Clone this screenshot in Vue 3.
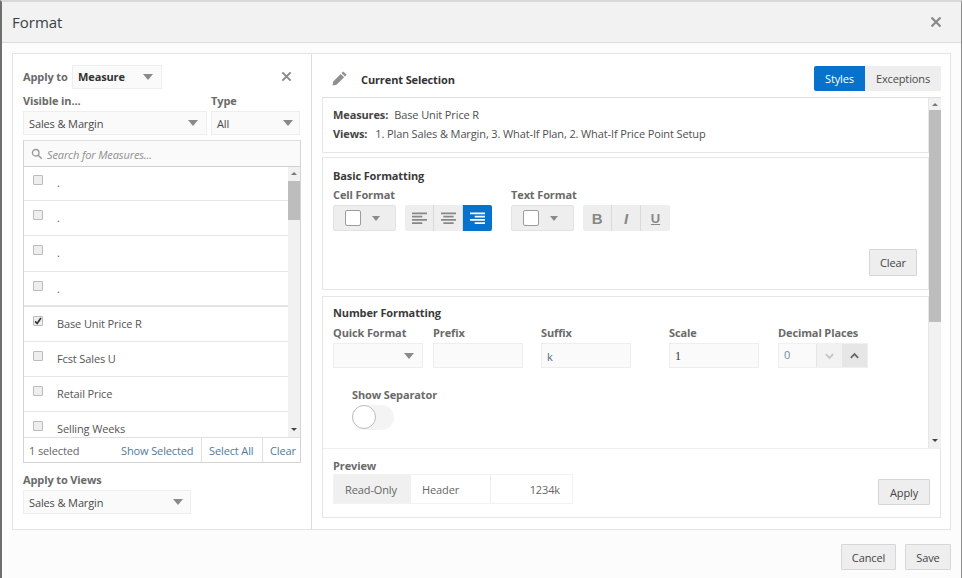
<script setup>
const rows = [
  { label: '.', checked: false }, { label: '.', checked: false }, { label: '.', checked: false }, { label: '.', checked: false },
  { label: 'Base Unit Price R', checked: true }, { label: 'Fcst Sales U', checked: false },
  { label: 'Retail Price', checked: false }, { label: 'Selling Weeks', checked: false }
]
</script>

<template>
  <div class="dialog">
    <header class="head">
      <h1>Format</h1>
      <svg class="x big" viewBox="0 0 12 12"><path d="M1.5 1.5l9 9M10.5 1.5l-9 9" /></svg>
    </header>
    <main class="main">
      <section class="left">
        <div class="applyrow">
          <label class="lab">Apply to</label>
          <div class="sel measure"><b>Measure</b><i class="caret"></i></div>
          <svg class="x small" viewBox="0 0 12 12"><path d="M1.5 1.5l9 9M10.5 1.5l-9 9" /></svg>
        </div>
        <div class="filters">
          <div class="fvis"><label class="lab">Visible in...</label><div class="sel"><span>Sales &amp; Margin</span><i class="caret"></i></div></div>
          <div class="ftype"><label class="lab">Type</label><div class="sel"><span>All</span><i class="caret"></i></div></div>
        </div>
        <div class="listbox">
          <div class="search">
            <svg viewBox="0 0 14 14" class="mag"><circle cx="5.5" cy="5.5" r="3.8" /><path d="M8.5 8.5l4 4" /></svg>
            <em>Search for Measures...</em>
          </div>
          <div class="listbody">
            <div class="rows">
              <div v-for="(r, i) in rows" :key="i" class="row">
                <span class="cb"><svg v-if="r.checked" viewBox="0 0 12 12"><path d="M2.5 6.5l2.5 2.5 4.5-6.5" /></svg></span>
                <span class="rowlabel">{{ r.label }}</span>
              </div>
            </div>
            <div class="sb">
              <i class="up"></i><div class="track"><div class="thumb t1"></div></div><i class="down"></i>
            </div>
          </div>
          <div class="listfoot">
            <span class="count">1 selected</span>
            <a class="fa">Show Selected</a><a class="fb">Select All</a><a class="fc">Clear</a>
          </div>
        </div>
        <label class="lab views">Apply to Views</label>
        <div class="sel viewsel"><span>Sales &amp; Margin</span><i class="caret"></i></div>
      </section>

      <section class="right">
        <div class="righthead">
          <svg class="pencil" viewBox="0 0 16 16"><path d="M11.2 1.4l3.4 3.4-1.7 1.7-3.4-3.4zM8.7 3.9l3.4 3.4-7.6 7.5-4 .7.7-4z" /></svg>
          <strong>Current Selection</strong>
          <div class="tabs"><span class="on">Styles</span><span>Exceptions</span></div>
        </div>
        <div class="scroller">
          <div class="content">
            <div class="box b1">
              <p><b>Measures:</b><span class="v1">Base Unit Price R</span></p>
              <p><b>Views:</b><span class="v2">1. Plan Sales &amp; Margin, 3. What-If Plan, 2. What-If Price Point Setup</span></p>
            </div>
            <div class="box b2">
              <h2>Basic Formatting</h2>
              <div class="fmtrow">
                <div class="cellf">
                  <label class="lab">Cell Format</label>
                  <div class="tools">
                    <div class="btn color"><i class="sw"></i><i class="caret"></i></div>
                    <div class="group">
                      <span><svg viewBox="0 0 16 12"><path d="M0 1h16M0 4.5h11M0 8h16M0 11.5h11" /></svg></span>
                      <span><svg viewBox="0 0 16 12"><path d="M0 1h16M2.5 4.5h11M0 8h16M2.5 11.5h11" /></svg></span>
                      <span class="on"><svg viewBox="0 0 16 12"><path d="M0 1h16M5 4.5h11M0 8h16M5 11.5h11" /></svg></span>
                    </div>
                  </div>
                </div>
                <div class="textf">
                  <label class="lab">Text Format</label>
                  <div class="tools">
                    <div class="btn color"><i class="sw"></i><i class="caret"></i></div>
                    <div class="group txt">
                      <span class="bb">B</span><span class="ii">I</span><span class="uu">U</span>
                    </div>
                  </div>
                </div>
              </div>
              <div class="clearrow"><button class="pb clear">Clear</button></div>
            </div>
            <div class="box b3">
              <h2>Number Formatting</h2>
              <div class="numrow">
                <div class="f1"><label class="lab">Quick Format</label><div class="sel"><span></span><i class="caret"></i></div></div>
                <div class="f2"><label class="lab">Prefix</label><div class="inp"></div></div>
                <div class="f3"><label class="lab">Suffix</label><div class="inp">k</div></div>
                <div class="f4"><label class="lab">Scale</label><div class="inp serif">1</div></div>
                <div class="f5"><label class="lab">Decimal Places</label>
                  <div class="stepper"><span class="val">0</span>
                    <span class="st"><svg viewBox="0 0 12 8"><path d="M2 2l4 4 4-4" /></svg></span>
                    <span class="st dark"><svg viewBox="0 0 12 8"><path d="M2 6l4-4 4 4" /></svg></span>
                  </div>
                </div>
              </div>
              <div class="sep">
                <label class="lab">Show Separator</label>
                <div class="toggle"><i></i></div>
              </div>
            </div>
          </div>
          <div class="sb sb2">
            <i class="up"></i><div class="track"><div class="thumb t2"></div></div><i class="down"></i>
          </div>
        </div>
        <div class="preview">
          <div>
            <label class="lab">Preview</label>
            <div class="pv"><span class="ro">Read-Only</span><span class="hd">Header</span><span class="num">1234k</span></div>
          </div>
          <button class="pb apply">Apply</button>
        </div>
      </section>
    </main>
    <footer class="foot">
      <button class="pb cancel">Cancel</button>
      <button class="pb save">Save</button>
    </footer>
  </div>
</template>

<style scoped>
.dialog { width: 962px; height: 578px; box-sizing: border-box; display: flex; flex-direction: column; background: #fcfcfc; border-left: 2px solid #6f6f6f; border-right: 1px solid #8a8a8a; border-top: 2px solid #d8d8d8; font-family: "Open Sans", sans-serif; font-size: 11px; letter-spacing: -0.12px; color: #4a4a4a; overflow: hidden; }
.head { height: 40px; flex: none; background: #f2f2f2; border-bottom: 1px solid #dcdcdc; display: flex; align-items: center; justify-content: space-between; padding: 0 19px 0 10px; }
h1 { margin: 0; font-size: 15px; font-weight: 400; color: #3a3f45; letter-spacing: 0; }
.x { fill: none; stroke: #8a8a8a; stroke-width: 2.2; }
.x.big { width: 12px; height: 12px; }
.x.small { width: 11px; height: 11px; margin-left: auto; margin-right: 9px; }
.main { margin: 10px 10px 0 10px; height: 477px; flex: none; box-sizing: border-box; display: flex; background: #fff; border: 1px solid #e4e4e4; }
.left { width: 299px; flex: none; box-sizing: border-box; border-right: 1px solid #dedede; padding: 10px 10px 0 10px; }
.lab { display: block; font-weight: 700; font-size: 11px; color: #6a6a6a; line-height: 14px; }
.applyrow { display: flex; align-items: center; height: 25px; }
.applyrow .lab { width: 49px; flex: none; }
.sel { height: 24px; box-sizing: border-box; background: #fafafa; border: 1px solid #eee; display: flex; align-items: center; justify-content: space-between; padding: 0 8px 0 5px; color: #4a4a4a; }
.measure { width: 90px; color: #333; }
.caret { display: inline-block; width: 0; height: 0; border-left: 5px solid transparent; border-right: 5px solid transparent; border-top: 6px solid #8a8a8a; }
.filters { display: flex; gap: 4px; margin-top: 5px; }
.fvis { width: 184px; } .ftype { width: 89px; }
.ftype .sel { padding-right: 6px; }
.filters .lab { margin-bottom: 3px; }
.listbox { margin-top: 5px; width: 278px; height: 323px; box-sizing: border-box; border: 1px solid #d4d4d4; border-top-color: #ddd; display: flex; flex-direction: column; }
.search { height: 26px; flex: none; box-sizing: border-box; background: #fafafa; border-bottom: 1px solid #d0d0d0; display: flex; align-items: center; padding-left: 7px; gap: 4px; }
.search em { color: #8f8f8f; font-size: 11px; padding-top: 2px; }
.mag { width: 12px; height: 12px; fill: none; stroke: #999; stroke-width: 1.6; }
.listbody { flex: 1; min-height: 0; display: flex; overflow: hidden; }
.rows { flex: 1; overflow: hidden; margin-top: -1px; }
.row { height: 35.2px; box-sizing: border-box; border-bottom: 1px solid #e6e6e6; display: flex; padding-left: 9px; }
.row:nth-child(4) { border-bottom: 2px solid #e4e4e4; }
.cb { width: 10px; height: 10px; margin-top: 9px; box-sizing: border-box; background: #eee; border: 1px solid #bbb; border-radius: 1px; flex: none; }
.cb svg { display: block; width: 10px; height: 10px; margin: -1px; fill: none; stroke: #333; stroke-width: 2; }
.rowlabel { margin-left: 14px; margin-top: 9px; line-height: 15px; color: #555; white-space: nowrap; }
.sb { width: 12px; flex: none; background: #f1f1f1; display: flex; flex-direction: column; align-items: center; }
.sb .up, .sb .down { flex: none; width: 0; height: 0; margin: 5px 0 6px; border-left: 3px solid transparent; border-right: 3px solid transparent; }
.sb .up { border-bottom: 3px solid #777; }
.sb .down { border-top: 3px solid #444; }
.sb2 .up { margin: 5px 0 4px; }
.track { flex: 1; width: 100%; }
.thumb { background: #bdbdbd; width: 100%; }
.t1 { height: 39px; }
.t2 { height: 212px; }
.listfoot { height: 25px; flex: none; box-sizing: border-box; border-top: 1px solid #e0e0e0; display: flex; align-items: center; }
.listfoot a { color: #4f7a9c; height: 100%; display: flex; align-items: center; box-sizing: border-box; }
.count { width: 97px; padding-left: 5px; box-sizing: border-box; color: #666; }
.fa { width: 80px; justify-content: flex-start; }
.fb { width: 61px; border-left: 1px solid #e0e0e0; padding-left: 7px; }
.fc { border-left: 1px solid #e0e0e0; padding-left: 7px; flex: 1; }
.views { margin-top: 10px; margin-bottom: 3px; }
.viewsel { width: 168px; padding-right: 7px; }
.right { flex: 1; min-width: 0; padding: 0 9px 0 10px; display: flex; flex-direction: column; }
.righthead { height: 43px; flex: none; display: flex; align-items: center; padding: 0 0 0 10px; box-sizing: border-box; }
.pencil { width: 16px; height: 16px; fill: #8f8f8f; margin-top: 4px; }
.righthead strong { margin-left: 13px; color: #333; font-size: 11px; font-weight: 700; margin-top: 8px; }
.tabs { margin-left: auto; display: flex; height: 25px; margin-top: 5px; }
.tabs span { display: flex; align-items: center; justify-content: center; background: #eee; width: 76px; color: #4a4a4a; }
.tabs .on { background: #0572ce; color: #fff; width: 51px; border-radius: 2px 0 0 2px; }
.scroller { height: 350px; flex: none; display: flex; border-top: 1px solid #d8dfe6; overflow: hidden; }
.content { flex: 1; min-width: 0; overflow: hidden; }
.box { border: 1px solid #e6e6e6; box-sizing: border-box; padding: 0 10px; }
.b1 { height: 55px; padding-top: 10px; border-top: 0; }
.b1 p { margin: 0 0 5px; line-height: 14px; display: flex; color: #4f4f4f; }
.b1 b { color: #444; }
.v1 { margin-left: 6px; } .v2 { margin-left: 8px; }
h2 { margin: 0; font-size: 11px; font-weight: 700; color: #3a3a3a; line-height: 14px; }
.b2 { height: 133px; margin-top: 4px; padding-top: 11px; }
.fmtrow { display: flex; margin-top: 5px; }
.cellf { width: 178px; }
.tools { display: flex; gap: 9px; margin-top: 3px; }
.btn.color { width: 63px; height: 26px; box-sizing: border-box; background: #eee; border: 1px solid #e2e2e2; border-radius: 2px; display: flex; align-items: center; padding-left: 11px; gap: 11px; }
.sw { width: 16px; height: 16px; box-sizing: border-box; background: #fff; border: 1px solid #9c9c9c; border-radius: 2px; }
.btn.color .caret { border-left-width: 4px; border-right-width: 4px; border-top-width: 5px; }
.group { display: flex; height: 26px; border-radius: 2px; overflow: hidden; }
.group span { width: 29px; display: flex; align-items: center; justify-content: center; background: #eee; box-sizing: border-box; border-right: 1px solid #dadada; }
.group span:last-child { border-right: 0; }
.group svg { width: 15px; height: 12px; fill: none; stroke: #888; stroke-width: 2; }
.group .on { background: #0572ce; }
.group .on svg { stroke: #fff; }
.txt span { font-family: "Liberation Sans", sans-serif; font-size: 15px; color: #888; font-weight: 700; }
.ii { font-style: italic; }
.uu { text-decoration: underline; font-size: 13px !important; }
.clearrow { display: flex; justify-content: flex-end; margin-top: 18px; }
.pb { box-sizing: border-box; background: #eee; border: 1px solid #d6d6d6; border-radius: 1px; font-family: "Open Sans", sans-serif; font-size: 11px; letter-spacing: -0.12px; color: #444; padding: 0; }
.clear { width: 48px; height: 27px; margin-right: 1px; }
.b3 { height: 160px; margin-top: 6px; padding-top: 9px; }
.numrow { display: flex; margin-top: 6px; }
.numrow .lab { margin-bottom: 3px; }
.f1 { width: 90px; margin-right: 10px; } .f2 { width: 90px; margin-right: 18px; } .f3 { width: 90px; margin-right: 38px; } .f4 { width: 90px; margin-right: 19px; } .f5 { width: 90px; }
.f1 .sel { height: 25px; }
.inp { height: 25px; box-sizing: border-box; background: #fafafa; border: 1px solid #eee; padding: 0 5px; line-height: 25px; color: #4a6a8a; }
.serif { font-family: "Liberation Serif", serif; font-size: 12px; color: #333; }
.stepper { height: 25px; display: flex; box-sizing: border-box; border: 1px solid #f0f0f0; }
.val { width: 38px; background: #fafafa; padding-left: 5px; box-sizing: border-box; line-height: 22px; color: #6f8ba5; }
.st { width: 25px; background: #f2f2f2; display: flex; align-items: center; justify-content: center; border-left: 1px solid #e6e6e6; }
.st.dark { background: #e6e6e6; }
.st svg { width: 11px; height: 8px; fill: none; stroke: #c4c4c4; stroke-width: 2; }
.st.dark svg { stroke: #666; }
.sep { margin: 20px 0 0 19px; }
.toggle { margin-top: 3px; width: 42px; height: 25px; background: #f4f4f4; border-radius: 13px; display: flex; }
.toggle i { width: 24px; height: 24px; box-sizing: border-box; border-radius: 50%; background: #fff; border: 1px solid #bbb; }
.preview { height: 70px; flex: none; width: 100%; box-sizing: border-box; border: 1px solid #e6e6e6; border-top: 1px solid #eee; display: flex; justify-content: space-between; padding: 10px 10px 0; }
.pv { display: flex; height: 28px; margin-top: 1px; border: 1px solid #f2f2f2; align-items: stretch; }
.pv span { display: flex; align-items: center; box-sizing: border-box; color: #666; }
.ro { width: 77px; background: #f0f0f0; justify-content: center; padding-right: 3px; }
.hd { width: 80px; padding-left: 11px; border-right: 1px solid #eee; }
.num { width: 81px; justify-content: flex-end; padding-right: 12px; }
.apply { width: 52px; height: 26px; margin-top: 20px; }
.foot { flex: 1; display: flex; justify-content: flex-end; padding: 14px 10px 0 0; gap: 9px; }
.cancel { width: 55px; height: 26px; }
.save { width: 46px; height: 26px; }
</style>
